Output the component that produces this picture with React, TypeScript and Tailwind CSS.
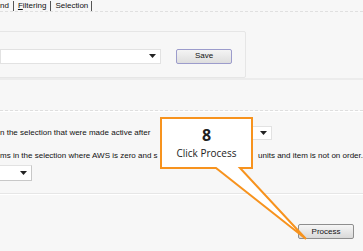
const Arrow = () => (
  <svg width="7" height="4" viewBox="0 0 7 4" className="block">
    <path d="M0 0H7L3.5 4Z" fill="#222" />
  </svg>
);

const Select = ({ className }: { className: string }) => (
  <div className={`flex items-center justify-end bg-white border border-[#e2e2e2] ${className}`}>
    <Arrow />
  </div>
);

const App = () => {
  return (
    <div className="relative w-[363px] h-[251px] overflow-hidden bg-[#f7f7f7] font-['Liberation_Sans',Arial,sans-serif] text-[8px] text-[#111]">
      {/* tabs */}
      <div className="flex items-center h-[11px] leading-none">
        <span>nd</span>
        <span className="mx-[4px] w-px h-[10px] bg-[#555]" />
        <span>
          <span className="underline">F</span>iltering
        </span>
        <span className="mx-[4px] w-px h-[10px] bg-[#555]" />
        <span>Selection</span>
        <span className="ml-[3px] w-px h-[10px] bg-[#555]" />
      </div>
      <div className="h-px border-t border-dashed border-[#e0e0e0]" />
      <div className="h-[19px]" />

      {/* group box */}
      <div className="ml-[-3px] w-[249px] h-[47px] border border-[#e6e6e6] rounded-[2px] flex items-center gap-[15px] pl-[2px] pt-[3px]">
        <Select className="w-[161px] h-[15px] pr-[4px]" />
        <button className="w-[56px] h-[15px] rounded-[2px] border border-[#9c9ccc] bg-gradient-to-b from-[#f4f4f4] to-[#dedede] text-[8px] leading-none">
          Save
        </button>
      </div>
      <div className="h-[2px] bg-[#ececec]" />
      <div className="h-[30px]" />
      <div className="h-px border-t border-dashed border-[#dedede]" />
      <div className="h-px bg-white" />

      {/* options */}
      <div className="h-[14px]" />
      <div className="flex items-center h-[14px] whitespace-nowrap">
        <span className="w-[168px]">n the selection that were made active after</span>
        <Select className="w-[104px] h-[14px] pr-[4px]" />
      </div>
      <div className="h-[9px]" />
      <div className="flex items-center h-[14px] whitespace-nowrap">
        <span className="w-[259px]">ms in the selection where AWS is zero and s</span>
        <span>units and item is not on order.</span>
      </div>
      <div className="h-[2px]" />
      <Select className="ml-[-3px] w-[35px] h-[16px] pr-[4px] border-[#dcdcdc] border-r-[#c8c8c8] border-b-[#c8c8c8]" />
      <div className="h-[12px]" />
      <div className="h-px bg-[#e6e6e6]" />
      <div className="h-px bg-white" />

      {/* bottom */}
      <div className="flex justify-end pr-[9px] pt-[29px]">
        <button className="w-[56px] h-[15px] rounded-[2px] border border-[#8e8e8e] bg-gradient-to-b from-[#f6f6f6] to-[#d9d9d9] text-[8px] leading-none">
          Process
        </button>
      </div>

      {/* callout */}
      <svg className="absolute left-0 top-0 pointer-events-none" width="363" height="251">
        <path
          d="M161 118H252V168H240L306 239L216 168H161Z"
          fill="#ffffff"
          stroke="#f7931e"
          strokeWidth="2"
          strokeLinejoin="miter"
        />
      </svg>
      <div className="absolute left-[161px] top-[118px] w-[91px] h-[50px] flex flex-col items-center font-['Open_Sans',sans-serif] text-[#222]">
        <span className="mt-[8px] text-[16px] font-bold leading-[18px]">8</span>
        <span className="mt-[3px] text-[10px] leading-[12px]">Click Process</span>
      </div>
    </div>
  );
};

export default App;
